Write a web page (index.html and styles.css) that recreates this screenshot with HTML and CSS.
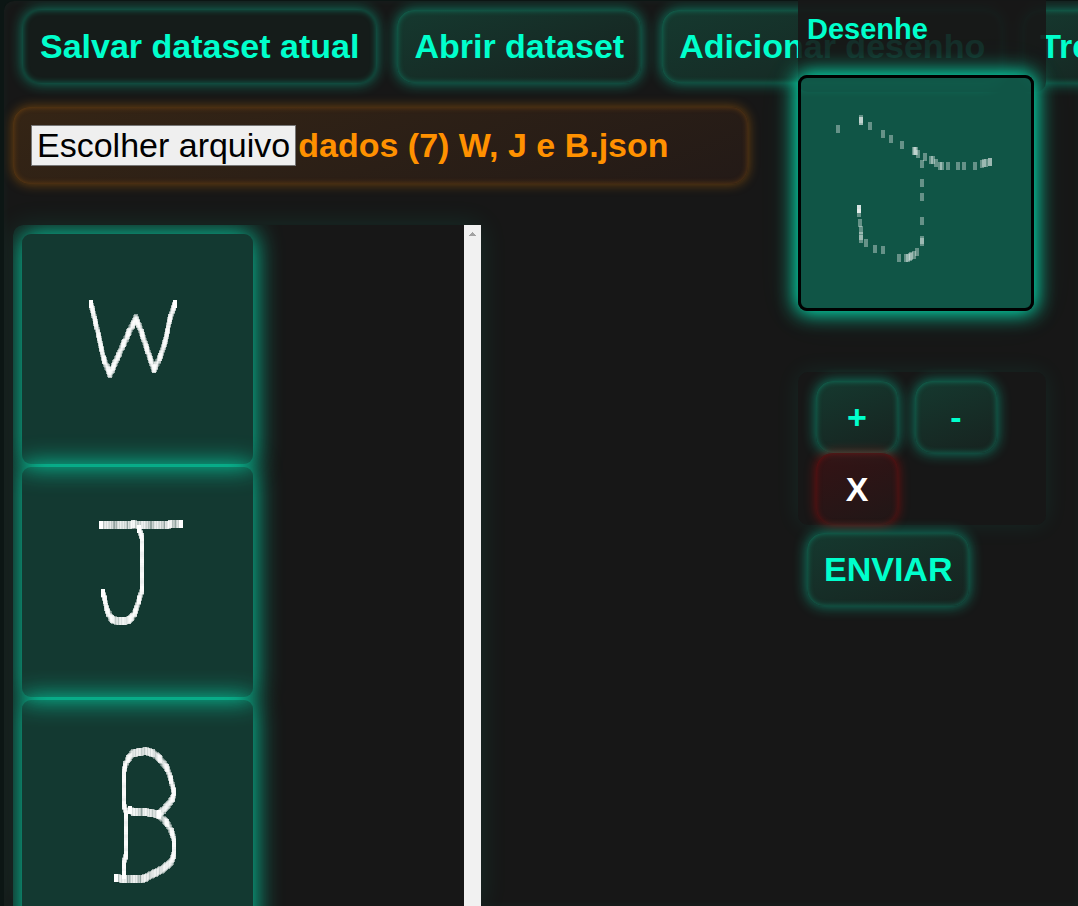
FILE: index.html
```html
<!DOCTYPE html>
<html lang="pt-BR">
<head>
<meta charset="utf-8">
<title>Dataset de desenhos</title>
<link rel="stylesheet" href="styles.css">
</head>
<body>
<main class="workspace">
  <nav class="toolbar">
    <button class="btn btn-dark" type="button">Salvar dataset atual</button>
    <button class="btn" type="button">Abrir dataset</button>
    <button class="btn" type="button">Adicionar desenho</button>
    <button class="btn" type="button">Treinar</button>
  </nav>
  <label class="file-picker">
    <input class="file-input" type="file" accept=".json">
    <span class="file-button">Escolher arquivo</span>
    <span class="file-name">dados (7) W, J e B.json</span>
  </label>
  <section class="samples" aria-label="Amostras">
    <div class="sample-list">
      <canvas class="sample" width="231" height="230" data-drawing="w"></canvas>
      <canvas class="sample" width="231" height="230" data-drawing="j"></canvas>
      <canvas class="sample" width="231" height="230" data-drawing="b"></canvas>
    </div>
    <div class="scroll-track" aria-hidden="true">
      <svg class="scroll-arrow" viewBox="0 0 7 4" width="7" height="4"><path d="M3 0h1v1h1v1h1v1h1v1H0V3h1V2h1V1h1z"/></svg>
    </div>
  </section>
</main>
<aside class="draw-panel">
  <h2 class="draw-title">Desenhe</h2>
  <canvas class="draw-area" width="230" height="230" data-drawing="current"></canvas>
  <div class="controls">
    <button class="btn btn-small" type="button">+</button>
    <button class="btn btn-small" type="button">-</button>
    <button class="btn btn-small btn-danger" type="button">X</button>
  </div>
  <button class="btn btn-send" type="button">ENVIAR</button>
</aside>
<script src="drawings.js"></script>
</body>
</html>
```

FILE: styles.css
```css
* {
  box-sizing: border-box;
}

body {
  margin: 0;
  height: 100vh;
  overflow: hidden;
  position: relative;
  background: #0c1614;
  font-family: "Liberation Sans", Arial, sans-serif;
  font-size: 34px;
  line-height: 39px;
}

.workspace {
  display: flex;
  flex-direction: column;
  align-items: flex-start;
  height: 100%;
  margin-left: 4px;
  padding: 9px 0 0 9px;
  overflow: hidden;
  border-top: 1px solid #0c1614;
  border-radius: 10px 0 0 0;
  background: #171717;
  box-shadow: inset 0 0 10px rgba(0, 255, 200, 0.04);
}

.toolbar {
  display: flex;
  gap: 21px;
  margin: 0 0 24px 10px;
}

.btn {
  flex: none;
  margin: 0;
  padding: 17px;
  border: 0;
  border-radius: 17px;
  background: linear-gradient(160deg, #15392f, #17221f);
  box-shadow: 0 0 14px rgba(0, 255, 200, 0.48), inset 0 0 6px rgba(0, 255, 200, 0.34);
  color: #00ffcc;
  font: bold 34px/39px "Liberation Sans", Arial, sans-serif;
  white-space: nowrap;
}

.btn-dark {
  background: #151c1a;
}

.file-picker {
  display: flex;
  align-items: center;
  gap: 2px;
  width: 735px;
  padding: 18px;
  border-radius: 17px;
  background: linear-gradient(160deg, #352515, #231a17);
  box-shadow: 0 0 12px rgba(255, 140, 0, 0.4), inset 0 0 6px rgba(255, 140, 0, 0.3);
}

.file-input {
  position: absolute;
  width: 1px;
  height: 1px;
  opacity: 0;
}

.file-button {
  padding: 0 5px;
  border: 1px solid #767676;
  background: #efefef;
  color: #000;
}

.file-name {
  color: #ff9100;
  font-weight: bold;
}

.samples {
  display: flex;
  flex: 1;
  min-height: 0;
  width: 468px;
  margin-top: 41px;
  border-radius: 10px 0 0 0;
  box-shadow: 0 0 28px rgba(0, 255, 200, 0.1);
}

.sample-list {
  display: flex;
  flex: 1;
  flex-direction: column;
  align-items: flex-start;
  gap: 3px;
  padding: 9px;
  overflow: hidden;
  border-radius: 10px 0 0 0;
  background: #171717;
}

.sample {
  flex: none;
  border-radius: 9px;
  background: rgba(0, 255, 200, 0.15);
  box-shadow: 0 0 26px 2px rgba(0, 255, 200, 0.78);
}

.scroll-track {
  width: 17px;
  padding-top: 7px;
  background: #f1f1f1;
}

.scroll-arrow {
  display: block;
  margin: 0 auto;
  fill: #a3a3a3;
}

.draw-panel {
  position: absolute;
  top: 0;
  right: 32px;
  width: 248px;
}

.draw-title {
  height: 92px;
  margin: 0 0 -17px;
  padding: 12px 9px;
  border-radius: 0 0 10px 10px;
  background: rgba(23, 23, 23, 0.9);
  color: #00ffcc;
  font-size: 29px;
  line-height: 34px;
}

.draw-area {
  display: block;
  position: relative;
  box-sizing: content-box;
  border: 3px solid #000;
  border-radius: 9px;
  background: rgba(0, 255, 200, 0.27);
  box-shadow: 0 0 20px 2px rgba(0, 255, 200, 0.95), 0 0 40px rgba(0, 255, 200, 0.12);
}

.controls {
  display: flex;
  flex-wrap: wrap;
  column-gap: 17px;
  margin: 61px 0 8px;
  padding: 9px 18px 0;
  border-radius: 10px;
  background: #171717;
  box-shadow: 0 0 24px rgba(0, 255, 200, 0.08);
}

.btn-small {
  width: 82px;
  height: 72px;
}

.btn-danger {
  background: linear-gradient(160deg, rgba(58, 18, 20, 0.85), rgba(33, 23, 23, 0.85));
  box-shadow: 0 0 12px rgba(255, 0, 0, 0.42), inset 0 0 6px rgba(255, 0, 0, 0.3);
  color: #fff;
}

.btn-send {
  margin-left: 9px;
}
```

FILE: drawings.js
```js
// Each stroke is a list of x, y pen positions, stamped with a 4x8 nib.
const drawings = {
  w: [
    [69,70, 73,86, 78,108, 82,126, 88,140, 93,129, 102,109, 107,98, 114,84, 120,99, 125,116, 132,135, 138,123, 144,104, 148,84, 153,70]
  ],
  j: [
    [79,58, 108,58, 111,57, 116,58, 145,58, 148,57, 159,57],
    [117,62, 120,70, 120,123, 117,133, 113,146, 110,150, 107,153, 103,154, 94,154, 90,152, 86,146, 84,140, 83,133, 81,126]
  ],
  b: [
    [94,178, 103,179, 121,179, 131,174, 141,169, 149,162, 152,155, 152,140, 150,132, 145,123, 137,115, 130,113, 123,112, 111,112, 108,110],
    [137,114, 146,105, 151,98, 152,92, 149,80, 145,68, 138,59, 131,53, 123,51, 111,53, 106,59, 103,65, 102,73, 102,105, 104,112, 104,155, 102,162, 102,175]
  ]
};

const currentDots = [
  37,51, 60,41, 60,43, 60,43, 69,48, 82,56, 90,61, 101,67, 113,73, 114,73, 115,73, 117,76,
  124,79, 130,82, 132,82, 135,85, 139,88, 141,88, 147,88, 157,88, 163,88, 174,88, 181,86,
  183,85, 185,85, 189,84, 189,84, 121,86, 121,105, 121,119, 121,143, 121,162, 121,164,
  116,174, 113,177, 110,178, 109,179, 107,180, 105,180, 98,180, 82,172, 74,171, 65,165,
  60,161, 60,158, 60,152, 59,145, 58,135, 58,131, 58,131, 58,131, 58,131
];

function stamp(ctx, x, y) {
  ctx.fillRect(Math.round(x) - 2, Math.round(y) - 4, 4, 8);
}

function drawStroke(ctx, points) {
  let count = 0;
  for (let i = 2; i < points.length; i += 2) {
    const x0 = points[i - 2], y0 = points[i - 1];
    const dx = points[i] - x0, dy = points[i + 1] - y0;
    const steps = Math.max(1, Math.round(Math.hypot(dx, dy) / 1.6));
    for (let s = 0; s <= steps; s++) {
      ctx.globalAlpha = 0.25 + 0.35 * Math.abs(Math.sin(count++ * 0.37));
      stamp(ctx, x0 + dx * s / steps, y0 + dy * s / steps);
    }
  }
  const last = points.length - 2;
  ctx.globalAlpha = 1;
  stamp(ctx, points[0], points[1]);
  stamp(ctx, points[last], points[last + 1]);
}

document.querySelectorAll("canvas").forEach((canvas) => {
  const ctx = canvas.getContext("2d");
  ctx.fillStyle = "#fff";
  const name = canvas.dataset.drawing;
  if (name === "current") {
    ctx.globalAlpha = 0.36;
    for (let i = 0; i < currentDots.length; i += 2) {
      stamp(ctx, currentDots[i], currentDots[i + 1]);
    }
  } else {
    drawings[name].forEach((stroke) => drawStroke(ctx, stroke));
  }
});
```
